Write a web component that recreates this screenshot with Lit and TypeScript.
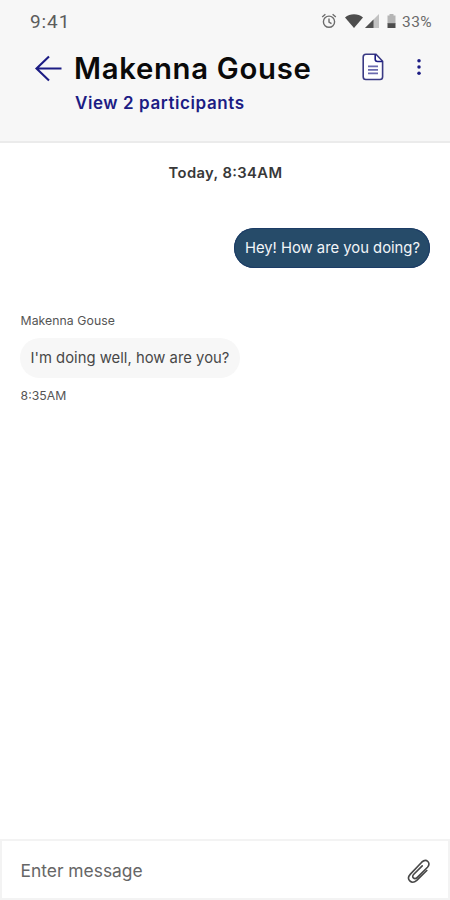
import { LitElement, html, css } from "lit";
import { customElement, property } from "lit/decorators.js";

@customElement("status-bar")
class StatusBar extends LitElement {
  static styles = css`
    :host { display: flex; height: 42px; padding: 1px 18px 0 30px; box-sizing: border-box; align-items: center; justify-content: space-between; font-family: Roboto, sans-serif; color: #555; }
    .clock { font-size: 19px; line-height: 22px; letter-spacing: 0.9px; color: #5c5c5c; }
    .right { display: flex; align-items: center; font-size: 15.5px; line-height: 18px; letter-spacing: 0.4px; color: #6a6a6a; }
    .alarm { margin-right: 8px; }
    .wifi { margin-right: 2px; }
    .signal { margin-right: 8px; }
    .battery { margin-right: 6px; }
    svg { display: block; margin-top: -2px; }
  `;
  render() {
    return html`
      <span class="clock">9:41</span>
      <div class="right">
        <svg class="alarm" width="16" height="16" viewBox="0 0 16 16" fill="none" stroke="#6c6c6c" stroke-width="1.4">
          <circle cx="8" cy="8.7" r="5.6" />
          <path d="M1.2 4 4.4 1.3M11.6 1.3 14.8 4M8 5.5V9l2.5 1.6" />
        </svg>
        <svg class="wifi" width="18" height="14" viewBox="0 0 18 14">
          <path fill="#4d4d4d" d="M0 3.4C5-.8 13-.8 18 3.4L9 14Z" />
        </svg>
        <svg class="signal" width="14" height="14" viewBox="0 0 14 14">
          <path fill="#c2c2c2" d="M0 14 14 0V14Z" />
          <path fill="#505050" d="M0 14 8.5 5.5V14Z" />
        </svg>
        <svg class="battery" width="9" height="14" viewBox="0 0 8 14">
          <path fill="#b5b5b5" d="M2 0h4v1.5h2V10H0V1.5h2Z" />
          <path fill="#4d4d4d" d="M0 9.2h8V14H0Z" />
        </svg>
        <span>33%</span>
      </div>
    `;
  }
}

@customElement("chat-header")
class ChatHeader extends LitElement {
  @property() name = "";
  @property({ type: Number }) participants = 0;
  static styles = css`
    :host { display: grid; grid-template-columns: 40px 1fr auto; height: 100px; box-sizing: border-box; padding: 8px 28.5px 0 33.5px; color: #1c1c84; align-content: start; }
    .back { margin-top: 4.5px; }
    .name { margin: 1px 0 0; padding-left: 0.5px; font-size: 29.3px; line-height: 36px; font-weight: 600; color: #0a0a0a; letter-spacing: 0.7px; white-space: nowrap; }
    .people { margin-top: 5px; padding-left: 1.5px; font-size: 17px; line-height: 22px; font-weight: 600; letter-spacing: 0.58px; }
    .actions { display: flex; align-items: center; height: 34px; gap: 32px; }
    svg { display: block; }
  `;
  render() {
    return html`
      <svg class="back" width="28" height="28" viewBox="0 0 28 28" fill="none" stroke="currentColor" stroke-width="2.1">
        <path d="M27.5 13.5H2.5M15 1.5 2.5 13.5l12.5 12" />
      </svg>
      <div>
        <h1 class="name">${this.name}</h1>
        <div class="people">View ${this.participants} participants</div>
      </div>
      <div class="actions">
        <svg width="22" height="28" viewBox="0 0 22 28" fill="none" stroke="currentColor" stroke-width="1.6">
          <path fill="#fff" stroke="#3a3a84" d="M4 1.2H14L20.6 8.3V23.8Q20.6 26.5 18 26.5H3.8Q1.2 26.5 1.2 23.8V4Q1.2 1.2 4 1.2Z" />
          <path d="M13.2 1.5V6.3Q13.2 8.5 15.4 8.5H20.4" />
          <path stroke="#6a6aae" stroke-width="1.7" d="M6 13.3h10M6 16.8h10M6 20.3h10" />
        </svg>
        <svg width="6" height="18" viewBox="0 0 6 18" fill="currentColor">
          <circle cx="3" cy="2.8" r="1.75" /><circle cx="3" cy="9" r="1.75" /><circle cx="3" cy="15.2" r="1.75" />
        </svg>
      </div>
    `;
  }
}

@customElement("app-root")
class AppRoot extends LitElement {
  static styles = css`
    :host { display: flex; flex-direction: column; width: 450px; height: 900px; background: #fff; font-family: Inter, sans-serif; color: #444; }
    .top { height: 143px; box-sizing: border-box; background: #f7f7f7; border-bottom: 2px solid #ebebeb; }
    .thread { flex: 1; display: flex; flex-direction: column; align-items: flex-start; padding: 20px 20px 0; }
    .day { align-self: center; padding-left: 1px; font-size: 14.75px; line-height: 20px; font-weight: 600; color: #383838; letter-spacing: 0.38px; font-feature-settings: "case"; }
    .bubble { height: 40px; box-sizing: border-box; border-radius: 20px; font-size: 14.8px; line-height: 40px; padding: 0 10.5px; white-space: nowrap; }
    .mine { align-self: flex-end; margin-top: 45px; background: #264b69; box-shadow: inset 0 0 0 1px #1c3c66; color: #f2f5f8; padding-right: 10px; }
    .theirs { background: #f7f7f7; color: #484848; letter-spacing: 0.02px; }
    .meta { font-size: 12.25px; line-height: 16px; color: #555; padding-left: 0.5px; letter-spacing: 0.06px; }
    .author { margin: 45px 0 9px; }
    .time { margin-top: 10px; font-feature-settings: "case"; }
    .composer { height: 61px; box-sizing: border-box; border: 2px solid #f3f3f3; display: flex; align-items: center; justify-content: space-between; padding: 2px 17px 0 18.5px; font-size: 17.4px; color: #666; }
    svg { display: block; }
  `;
  render() {
    return html`
      <div class="top">
        <status-bar></status-bar>
        <chat-header name="Makenna Gouse" participants="2"></chat-header>
      </div>
      <div class="thread">
        <div class="day">Today, 8:34AM</div>
        <div class="bubble mine">Hey! How are you doing?</div>
        <div class="meta author">Makenna Gouse</div>
        <div class="bubble theirs">I'm doing well, how are you?</div>
        <div class="meta time">8:35AM</div>
      </div>
      <div class="composer">
        <span>Enter message</span>
        <svg width="24" height="26" viewBox="0 0 24 26" fill="none" stroke="#484848" stroke-width="1.6" stroke-linecap="round">
          <path d="M19.8 12.5 9.8 22.4C4.5 27 -1.4 21.3 3.4 16.1L14.7 4.2C19.3-.2 24.6 5 20.5 9.3L10.3 19.4C7.3 22.3 4 19 6.8 16.2L15.2 7.9" />
        </svg>
      </div>
    `;
  }
}
